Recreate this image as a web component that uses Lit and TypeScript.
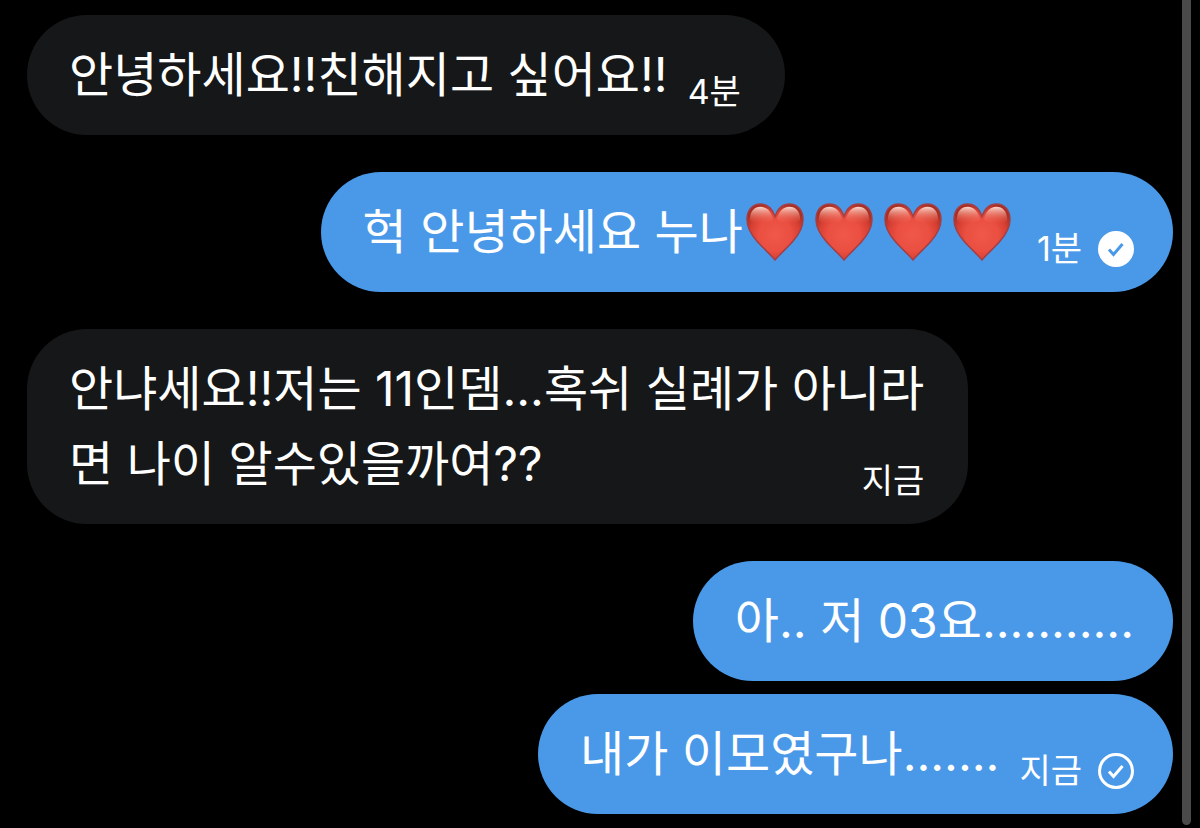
import { LitElement, html, css, svg } from "lit";
import { customElement, property } from "lit/decorators.js";

const HEART = "M30 14C27 5 21 1 15 1C6 1 1 8 1 17C1 25 5 32 11 39C17 46 24 52 30 59C36 52 43 46 49 39C55 32 59 25 59 17C59 8 54 1 45 1C39 1 33 5 30 14Z";

@customElement("heart-icon")
class HeartIcon extends LitElement {
  static styles = css`
    :host { display: inline-block; width: 58px; height: 58px; }
    svg { display: block; width: 100%; height: 100%; }
  `;
  render() {
    return html`<svg viewBox="0 0 60 60" role="img" aria-label="❤️">
      <defs>
        <radialGradient id="body" gradientUnits="userSpaceOnUse" cx="30" cy="33" r="34">
          <stop offset="0" stop-color="#f0584a" />
          <stop offset="0.5" stop-color="#ea4f41" />
          <stop offset="0.75" stop-color="#d84033" />
          <stop offset="1" stop-color="#a92d22" />
        </radialGradient>
        <linearGradient id="shine" x1="0" y1="0" x2="0" y2="1">
          <stop offset="0" stop-color="#fde0d6" stop-opacity="0.95" />
          <stop offset="0.4" stop-color="#f7a594" stop-opacity="0.6" />
          <stop offset="1" stop-color="#ee5a48" stop-opacity="0" />
        </linearGradient>
      </defs>
      <path d=${HEART} fill="url(#body)" stroke="#a04048" stroke-width="1.5" />
      <path d="M4 18C4 8 9 4 15 4C22 4 26 9 28 17C24 22 8 24 4 18Z" fill="url(#shine)" />
      <path d="M56 18C56 8 51 4 45 4C38 4 34 9 32 17C36 22 52 24 56 18Z" fill="url(#shine)" />
    </svg>`;
  }
}

interface Message {
  own: boolean;
  lines: string[];
  hearts?: number;
  time?: string;
  status?: "read" | "sent";
}

/* Consecutive messages of one sender share a group and sit closer together. */
const groups: Message[][] = [
  [{ own: false, lines: ["안녕하세요!!친해지고 싶어요!!"], time: "4분" }],
  [{ own: true, lines: ["헉 안녕하세요 누나"], hearts: 4, time: "1분", status: "read" }],
  [{ own: false, lines: ["안냐세요!!저는 11인뎀...혹쉬 실례가 아니라", "면 나이 알수있을까여??"], time: "지금" }],
  [
    { own: true, lines: ["아.. 저 03요..........."] },
    { own: true, lines: ["내가 이모였구나......."], time: "지금", status: "sent" },
  ],
];

@customElement("chat-bubble")
class ChatBubble extends LitElement {
  @property({ attribute: false }) message!: Message;
  static styles = css`
    :host { display: flex; }
    .bubble {
      padding: 22px 44px 23px 42px; border-radius: 60px;
      background: #161718; color: #fff;
      font-size: 48px; line-height: 75px; white-space: nowrap;
    }
    .own { background: #4a99e9; margin-left: auto; padding-right: 39px; }
    .line { display: block; }
    .last { display: flex; align-items: flex-end; }
    .hearts { display: flex; gap: 11px; margin: 0 6px 8px 3px; }
    .meta { display: flex; align-items: center; gap: 16px; margin-left: auto; padding-left: 20px; font-size: 34px; line-height: 40px; }
    .tick { width: 36px; height: 36px; }
  `;
  private tick(status: "read" | "sent") {
    const read = status === "read";
    return html`<svg class="tick" viewBox="0 0 36 36" role="img" aria-label=${status}>
      ${svg`<circle cx="18" cy="18" r="16.5" fill=${read ? "#fff" : "none"} stroke="#fff" stroke-width="3"/>
      <path d="M11 18.5L15.5 23.5L24.5 13" fill="none" stroke=${read ? "#4a99e9" : "#fff"} stroke-width="3"/>`}
    </svg>`;
  }
  render() {
    const m = this.message;
    const last = m.lines[m.lines.length - 1];
    return html`<div class="bubble ${m.own ? "own" : ""}">
      ${m.lines.slice(0, -1).map((l) => html`<span class="line">${l}</span>`)}
      <div class="last">
        <span>${last}</span>
        ${m.hearts ? html`<span class="hearts">${Array.from({ length: m.hearts }, () => html`<heart-icon></heart-icon>`)}</span>` : ""}
        ${m.time ? html`<div class="meta"><time>${m.time}</time>${m.status ? this.tick(m.status) : ""}</div>` : ""}
      </div>
    </div>`;
  }
}

@customElement("app-root")
class AppRoot extends LitElement {
  static styles = css`
    :host {
      display: flex; min-height: 100vh; box-sizing: border-box; background: #000;
      font-family: Inter, "Noto Sans CJK KR", sans-serif;
    }
    .list { flex: 1; min-width: 0; display: flex; flex-direction: column; gap: 37px; padding: 15px 0 13px 27px; }
    .group { display: flex; flex-direction: column; gap: 13px; }
    .scrollbar { width: 9px; margin: 0 9px 3px; border-radius: 0 0 5px 5px; background: #4a4a4a; }
  `;
  render() {
    return html`<main class="list">
        ${groups.map((g) => html`<section class="group">${g.map((m) => html`<chat-bubble .message=${m}></chat-bubble>`)}</section>`)}
      </main>
      <div class="scrollbar" aria-hidden="true"></div>`;
  }
}
